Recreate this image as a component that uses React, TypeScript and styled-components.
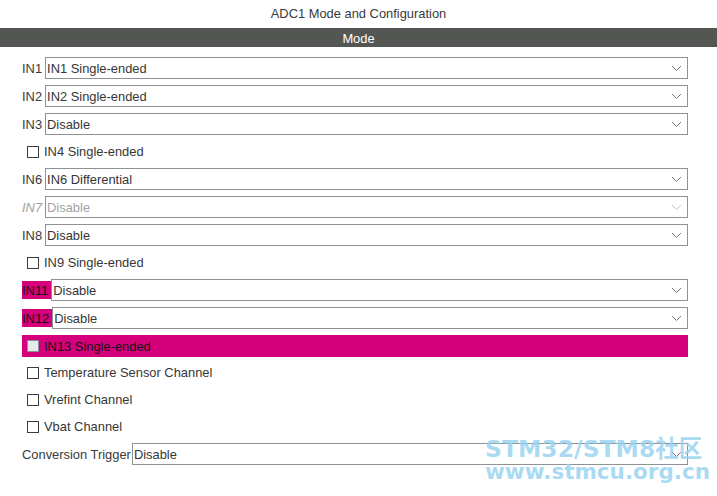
import React from "react";
import styled, { createGlobalStyle, css } from "styled-components";

const Global = createGlobalStyle`
  html, body { margin: 0; padding: 0; background: #ffffff; }
  body {
    font-family: "Liberation Sans", Arial, sans-serif;
    font-size: 12.9px;
    color: #363636;
  }
`;

const Page = styled.div`
  position: relative;
  width: 717px;
  height: 496px;
  overflow: hidden;
  background: #fff;
`;

const Title = styled.div`
  height: 28px;
  line-height: 28px;
  text-align: center;
  color: #3a3a3a;
`;

const Bar = styled.div`
  height: 19px;
  line-height: 21px;
  background: #545654;
  color: #ffffff;
  text-align: center;
`;

const Form = styled.div`
  display: flex;
  flex-direction: column;
  gap: 6px;
  padding: 10px 29px 0 22px;
`;

const SelectRow = styled.div`
  display: flex;
  align-items: center;
  height: 22px;
`;

const Label = styled.span<{ $alert?: boolean; $disabled?: boolean; $tight?: boolean }>`
  height: 18px;
  line-height: 20px;
  padding-right: ${(p) => (p.$tight ? "1px" : "3px")};
  white-space: nowrap;
  color: #3a3a3a;
  ${(p) =>
    p.$alert &&
    css`
      background: #d5007b;
      color: #141414;
      padding-right: 3px;
    `}
  ${(p) =>
    p.$disabled &&
    css`
      color: #a0a0a0;
      font-style: italic;
    `}
`;

const SelectBox = styled.div<{ $disabled?: boolean }>`
  flex: 1;
  display: flex;
  align-items: center;
  justify-content: space-between;
  height: 22px;
  box-sizing: border-box;
  border: 1px solid #8e9295;
  padding: 1px 5px 0 1px;
  color: ${(p) => (p.$disabled ? "#a3a3a3" : "#363636")};
  background: #fff;
`;

const Chevron = styled.svg<{ $disabled?: boolean }>`
  width: 11px;
  height: 7px;
  stroke: ${(p) => (p.$disabled ? "#c8c8c8" : "#7a7a7a")};
  fill: none;
`;

const CheckRow = styled.div<{ $alert?: boolean }>`
  display: flex;
  align-items: center;
  height: 21px;
  padding-left: 5px;
  gap: 5px;
  background: ${(p) => (p.$alert ? "#d5007b" : "transparent")};
  color: ${(p) => (p.$alert ? "#141414" : "#363636")};
  ${(p) =>
    p.$alert &&
    css`
      height: 22px;
      margin-bottom: -1px;
    `}
`;

const Box = styled.span<{ $alert?: boolean }>`
  width: 12px;
  height: 12px;
  box-sizing: border-box;
  border: 1px solid ${(p) => (p.$alert ? "#8a8f94" : "#3c3c3c")};
  background: ${(p) => (p.$alert ? "#e7eaed" : "#ffffff")};
`;

const Watermark = styled.div`
  position: absolute;
  left: 485px;
  top: 436px;
  font-family: "DejaVu Sans", "Noto Sans CJK SC", sans-serif;
  font-weight: bold;
  color: rgba(150, 210, 240, 0.82);
  pointer-events: none;
`;

const WmLine1 = styled.div`
  font-size: 23.5px;
  line-height: 26px;
`;

const WmLine2 = styled.div`
  font-size: 21.5px;
  line-height: 20px;
`;

type Sel = {
  kind: "select";
  label: string;
  value: string;
  alert?: boolean;
  disabled?: boolean;
  tight?: boolean;
};
type Chk = { kind: "check"; label: string; alert?: boolean };

const rows: (Sel | Chk)[] = [
  { kind: "select", label: "IN1", value: "IN1 Single-ended" },
  { kind: "select", label: "IN2", value: "IN2 Single-ended" },
  { kind: "select", label: "IN3", value: "Disable" },
  { kind: "check", label: "IN4 Single-ended" },
  { kind: "select", label: "IN6", value: "IN6 Differential" },
  { kind: "select", label: "IN7", value: "Disable", disabled: true },
  { kind: "select", label: "IN8", value: "Disable" },
  { kind: "check", label: "IN9 Single-ended" },
  { kind: "select", label: "IN11", value: "Disable", alert: true },
  { kind: "select", label: "IN12", value: "Disable", alert: true },
  { kind: "check", label: "IN13 Single-ended", alert: true },
  { kind: "check", label: "Temperature Sensor Channel" },
  { kind: "check", label: "Vrefint Channel" },
  { kind: "check", label: "Vbat Channel" },
  { kind: "select", label: "Conversion Trigger", value: "Disable", tight: true },
];

function Select({ value, disabled }: { value: string; disabled?: boolean }) {
  return (
    <SelectBox $disabled={disabled}>
      <span>{value}</span>
      <Chevron $disabled={disabled} viewBox="0 0 11 7">
        <polyline points="1,1 5.5,5.5 10,1" strokeWidth="1" />
      </Chevron>
    </SelectBox>
  );
}

export default function App() {
  return (
    <Page>
      <Global />
      <Title>ADC1 Mode and Configuration</Title>
      <Bar>Mode</Bar>
      <Form>
        {rows.map((r, i) =>
          r.kind === "select" ? (
            <SelectRow key={i}>
              <Label $alert={r.alert} $disabled={r.disabled} $tight={r.tight}>
                {r.label}
              </Label>
              <Select value={r.value} disabled={r.disabled} />
            </SelectRow>
          ) : (
            <CheckRow key={i} $alert={r.alert}>
              <Box $alert={r.alert} />
              <span>{r.label}</span>
            </CheckRow>
          )
        )}
      </Form>
      <Watermark>
        <WmLine1>STM32/STM8社区</WmLine1>
        <WmLine2>www.stmcu.org.cn</WmLine2>
      </Watermark>
    </Page>
  );
}
